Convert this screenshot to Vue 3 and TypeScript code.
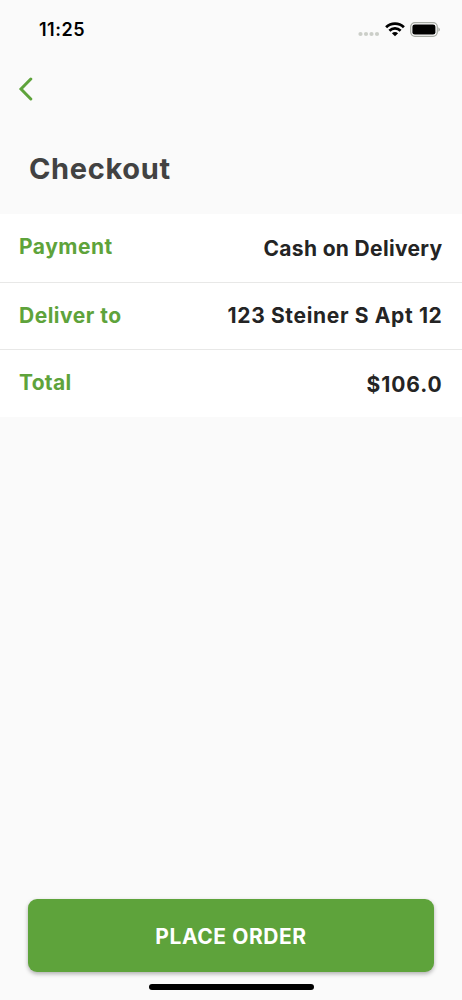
<script setup lang="ts">
interface Row {
  key: string
  label: string
  value: string
}

const rows: Row[] = [
  { key: 'payment', label: 'Payment', value: 'Cash on Delivery' },
  { key: 'address', label: 'Deliver to', value: '123 Steiner S Apt 12' },
  { key: 'total', label: 'Total', value: '$106.0' },
]
</script>

<template>
  <div class="screen">
    <header class="status">
      <span class="time">11:25</span>
      <div class="indicators">
        <svg class="dots" width="22" height="6" viewBox="0 0 22 6">
          <circle v-for="n in 4" :key="n" :cx="n * 5.5 - 3" cy="3" r="2.1" fill="#cbcec8" />
        </svg>
        <svg class="wifi" width="20" height="15" viewBox="0 0 20 15" fill="none" stroke="#000" stroke-width="2.8">
          <path d="M1.1 5.2C6.1 .4 13.9 .4 18.9 5.2" />
          <path d="M4.4 8.7C7.6 5.7 12.4 5.7 15.6 8.7" />
          <path d="M10 14.2L6.9 11.3Q10 8.8 13.1 11.3Z" fill="#000" stroke="none" />
        </svg>
        <svg class="battery" width="31" height="15" viewBox="0 0 31 15">
          <rect x=".7" y=".7" width="26.6" height="13.6" rx="4.2" fill="none" stroke="#a6aaa3" stroke-width="1.2" />
          <rect x="2.4" y="2.4" width="23" height="10.2" rx="2.4" fill="#000" />
          <path d="M28.5 5.2Q31 7.5 28.5 9.8Z" fill="#8d918a" />
        </svg>
      </div>
    </header>
    <button class="back" aria-label="Back">
      <svg width="16" height="24" viewBox="0 0 16 24" fill="none" stroke="#5ea33b" stroke-width="3" stroke-linecap="round">
        <path d="M12.8 2L3 12L12.8 22" />
      </svg>
    </button>
    <h1 class="title">Checkout</h1>
    <section class="rows">
      <div v-for="row in rows" :key="row.key" class="row" :class="row.key">
        <span class="label">{{ row.label }}</span>
        <span class="value">{{ row.value }}</span>
      </div>
    </section>
    <footer class="footer">
      <button class="order">PLACE ORDER</button>
      <div class="home"></div>
    </footer>
  </div>
</template>

<style>
body {
  margin: 0;
  background: #fafafa;
}
</style>

<style scoped>
.screen {
  width: 462px;
  height: 1000px;
  box-sizing: border-box;
  display: flex;
  flex-direction: column;
  background: #fafafa;
  font-family: Inter, sans-serif;
  overflow: hidden;
}
.status {
  height: 58px;
  flex: none;
  box-sizing: border-box;
  padding: 0 21px 0 39px;
  display: flex;
  justify-content: space-between;
  align-items: center;
}
.time {
  font-size: 18px;
  font-weight: 600;
  letter-spacing: .5px;
  color: #000;
}
.indicators {
  display: flex;
  align-items: center;
}
.dots {
  margin: 9px 5px 0 0;
}
.wifi {
  margin-right: 5px;
}
button {
  border: 0;
  font-family: inherit;
}
.back {
  width: 50px;
  height: 62px;
  padding: 0 0 0 18px;
  background: none;
  display: flex;
  align-items: center;
}
.title {
  margin: 29px 0 0 29px;
  height: 65px;
  line-height: 40px;
  font-size: 29px;
  font-weight: 650;
  letter-spacing: .65px;
  color: #424242;
}
.rows {
  background: #fff;
}
.row {
  height: 68px;
  box-sizing: border-box;
  padding: 0 20px 0 19px;
  display: flex;
  justify-content: space-between;
  line-height: 28px;
  font-size: 21px;
  font-weight: 650;
  letter-spacing: .5px;
}
.row + .row {
  border-top: 1px solid #e8e8e7;
}
.row.address {
  height: 67px;
}
.label {
  padding-top: 19px;
  color: #5ea33b;
}
.value {
  padding-top: 21px;
  margin-right: -.5px;
  color: #242424;
}
.payment .value {
  letter-spacing: .33px;
}
.address .value {
  padding-top: 19px;
  letter-spacing: .65px;
}
.total .value {
  letter-spacing: .9px;
}
.total .label {
  letter-spacing: .3px;
}
.footer {
  margin-top: auto;
  height: 101px;
  padding: 0 28px;
  display: flex;
  flex-direction: column;
  align-items: center;
}
.order {
  width: 100%;
  height: 73px;
  flex: none;
  padding: 1px 0 0;
  border-radius: 9px;
  background: #5ea33b;
  color: #fff;
  font-size: 21px;
  font-weight: 650;
  letter-spacing: .55px;
  box-shadow: 0 2px 4px rgba(0, 0, 0, .3);
}
.home {
  width: 165px;
  height: 6px;
  margin-top: 12px;
  border-radius: 3px;
  background: #000;
}
</style>
